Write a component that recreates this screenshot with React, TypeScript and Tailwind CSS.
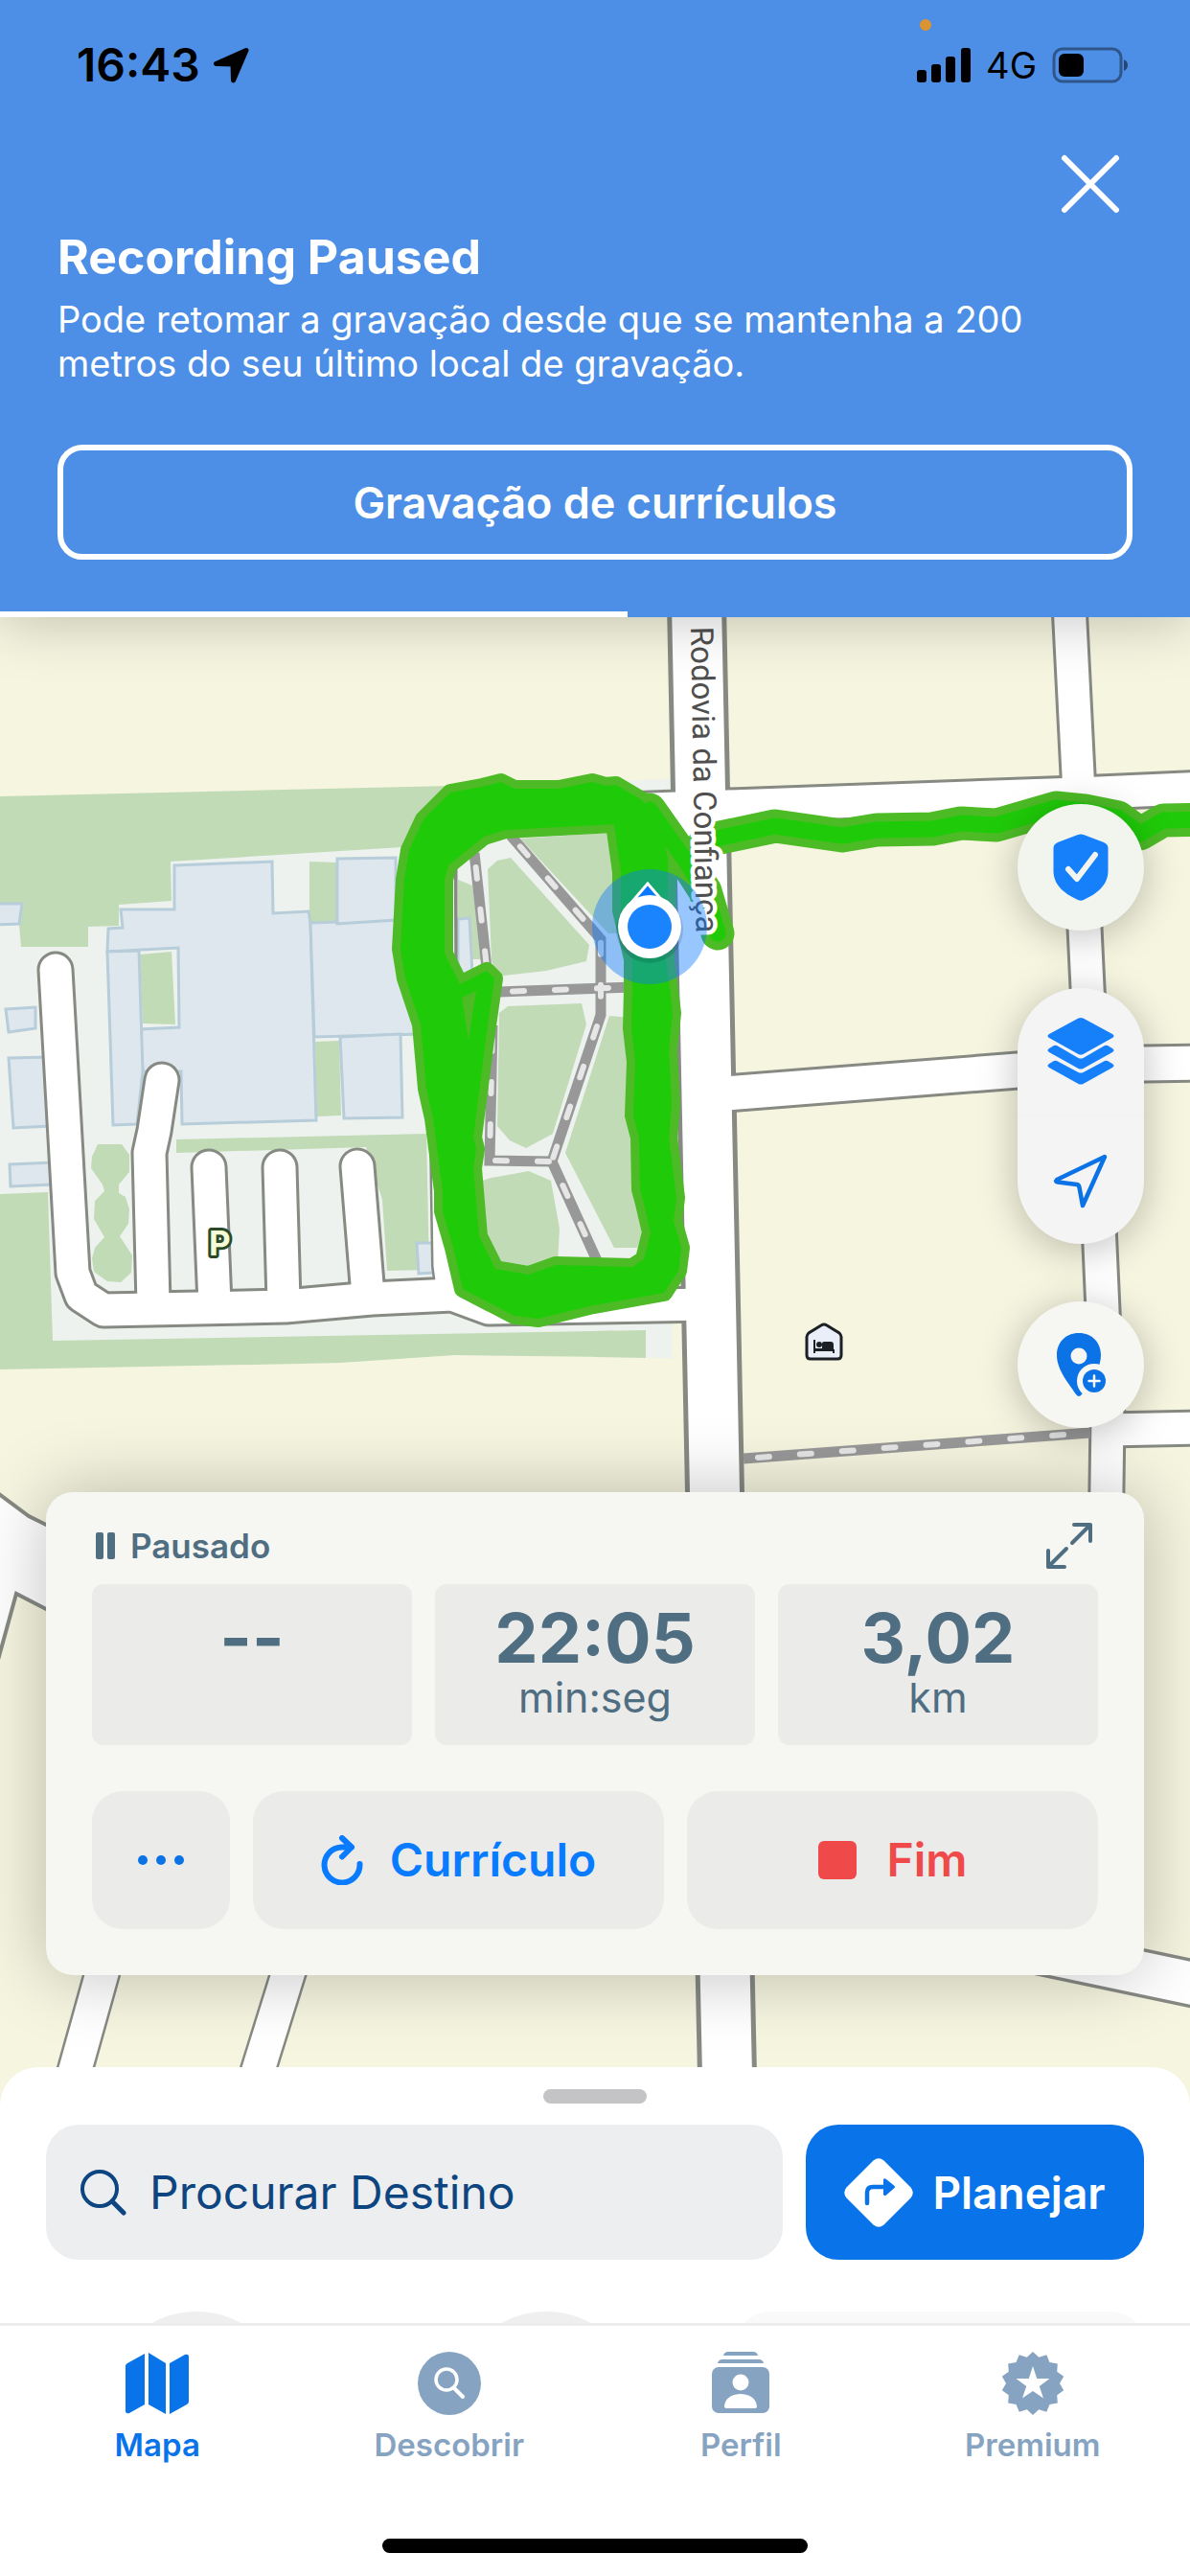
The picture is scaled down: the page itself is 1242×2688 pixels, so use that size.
import type { ReactNode } from 'react';

const CAMPUS_LAWNS = [
  '323,899 351,900 351,962 323,962',
  '146,996 179,993 183,1069 149,1068',
  '329,1087 354,1086 356,1164 331,1165',
  '184,1189 445,1183 448,1325 404,1326 399,1252 382,1197 184,1203',
  '102,1194 127,1194 135,1205 135,1223 124,1236 124,1245 131,1249 135,1262 134,1277 125,1290 138,1310 137,1328 126,1338 112,1337 98,1327 96,1313 99,1302 109,1291 98,1272 99,1253 109,1243 107,1236 95,1219 96,1207',
];

const PARK_LAWNS = [
  '509,907 519,898 533,895 615,986 612,1003 570,1013 517,1019 513,1001',
  '543,875 635,869 641,910 645,974 635,974',
  '521,1057 530,1050 607,1047 612,1069 577,1183 549,1198 532,1190 519,1175',
  '636,1060 660,1062 668,1247 672,1286 665,1302 641,1302 590,1203',
  '500,1233 513,1229 552,1222 575,1232 584,1282 582,1318 552,1326 515,1320 500,1286',
  '478,918 493,924 503,1001 478,1001',
];

const BUILDINGS = [
  '182,903 284,899 285,953 322,951 324,963 330,1169 190,1173 189,1118 149,1118 146,1074 187,1072 186,989 112,993 113,969 128,968 126,949 182,949',
  '112,993 145,992 149,1118 143,1173 118,1174',
  '324,963 412,960 440,960 440,1079 328,1082',
  '352,896 413,895 413,960 352,964',
  '478,959 490,958 493,1017 478,1017',
  '355,1082 418,1079 420,1166 359,1167',
  '-4,943 23,943 20,964 -4,965',
  '6,1053 37,1051 37,1073 9,1077',
  '9,1104 50,1103 52,1175 14,1177',
  '10,1215 54,1213 54,1236 11,1238',
  '435,1297 452,1297 452,1328 437,1329',
];

// [path, outer width, inner width]
const ROADS: [string, number, number][] = [
  ['M58 1012 L76 1328 L85 1352 L108 1367 L298 1363 L388 1355 L472 1351 L510 1365 L740 1361', 39, 33],
  ['M169 1127 L161 1180 L156 1203 L160 1360', 39, 33],
  ['M218 1218 L224 1360', 39, 33],
  ['M292 1218 L296 1358', 39, 33],
  ['M373 1217 L384 1352', 39, 33],
  ['M457 880 L458 1000 L467 1190 L469 1320 L473 1350', 38, 33],
  ['M600 847 L760 841 L1125 828 L1260 822', 39, 33],
  ['M1116 630 L1125 808 L1132 968 L1148 1300 L1156 1480 L1154 1620', 39, 33],
  ['M745 1142 L1062 1117 L1194 1110 L1260 1109', 41, 35],
  ['M1155 1492 L1260 1490', 39, 33],
  ['M960 2010 L1260 2073', 51, 44],
  ['M130 1975 L68 2197', 39, 34],
  ['M327 1975 L258 2197', 39, 34],
  ['M727 630 L746 1557 L758 2120 L760 2210', 62, 52],
];

const FOOTPATHS = [
  'M533 872 L627 980 L627 1059 L576 1212 L626 1322',
  'M495 890 L508 1010',
  'M520 1035 L660 1030',
  'M514 1070 L511 1211 L576 1212',
  'M776 1522 L1138 1495',
];

const LOOP =
  'M503 821 L523 816 L537 823 L583 823 L618 816 L632 820 L643 819 L670 835 L690 867 L697 895 L697 918 L695 1001 L702 1057 L698 1096 L701 1152 L698 1187 L706 1250 L703 1274 L711 1302 L708 1326 L693 1349 L615 1363 L562 1376 L537 1373 L483 1345 L473 1302 L462 1264 L462 1243 L452 1167 L445 1136 L439 1069 L423 1021 L418 990 L422 918 L427 887 L442 855 L470 827 Z ' +
  'M468 903 L505 873 L528 866 L641 860 L648 910 L648 950 L660 1001 L660 1033 L659 1073 L663 1108 L661 1164 L667 1187 L668 1241 L672 1256 L679 1286 L672 1314 L660 1322 L580 1320 L552 1330 L517 1324 L500 1290 L494 1219 L497 1199 L494 1187 L508 1077 L516 1021 L508 1013 L480 1027 L464 995 L464 918 Z';

const HOOK = 'M678 845 L714 896 L736 930 L749 974';
const EASTBOUND =
  'M735 880 L747 875 L809 862 L879 872 L915 866 L973 865 L1003 859 L1040 861 L1102 843 L1132 846 L1167 853 L1190 870 L1214 856 L1260 855';

function MapCanvas() {
  return (
    <svg
      className="absolute inset-0 h-full w-full"
      viewBox="0 644 1242 1553"
      preserveAspectRatio="xMidYMin slice"
      aria-hidden="true"
    >
      <rect x="-200" y="500" width="1700" height="1900" fill="#f6f5e0" />

      {/* Campus ground */}
      <path d="M0 831 L470 820 L640 818 L640 1416 L475 1414 L355 1422 L314 1423 L0 1429 Z" fill="#c1dbb7" />
      <path d="M178 899 L420 884 L640 870 L640 815 L702 813 L702 1417 L674 1417 L674 1388 L55 1399 L50 1244 L0 1246 L0 965 L20 965 L22 988 L92 988 L92 967 L124 966 L124 944 L179 940 Z" fill="#edf2ee" />
      <path d="M620 1389 L674 1388 L674 1417 L620 1416 Z" fill="#c1dbb7" />
      <g fill="#c1dbb7">
        {CAMPUS_LAWNS.map((points) => <polygon key={points} points={points} />)}
      </g>
      <g fill="#dee6ee" stroke="#b7cdd9" strokeWidth="3">
        {BUILDINGS.map((points) => <polygon key={points} points={points} />)}
      </g>

      {/* Roads: casings first so that the junctions stay open */}
      <g fill="none" stroke="#868a83" strokeLinejoin="round">
        {ROADS.map(([d, outer], i) => (
          <path key={d} d={d} strokeWidth={outer} strokeLinecap={i < 5 ? 'round' : 'butt'} />
        ))}
      </g>
      <path d="M-5 1556 L30 1582 L48 1591 L130 1625 L130 1712 L48 1679 L17 1663 L-5 1743 Z" fill="#fff" stroke="#868a83" strokeWidth="4" />
      <g fill="none" stroke="#fff" strokeLinejoin="round">
        {ROADS.map(([d, , inner], i) => (
          <path key={d} d={d} strokeWidth={inner} strokeLinecap={i < 5 ? 'round' : 'butt'} />
        ))}
      </g>

      {/* Park */}
      <path d="M478 880 L660 850 L690 870 L690 1320 L500 1330 L496 1100 L478 1030 Z" fill="#edf2ee" />
      <g fill="#c1dbb7">
        {PARK_LAWNS.map((points) => <polygon key={points} points={points} />)}
      </g>
      <polygon points="478,959 490,958 493,1017 478,1017" fill="#dee6ee" stroke="#b7cdd9" strokeWidth="3" />
      <path d="M476 900 V1010" stroke="#868a83" strokeWidth="3" />
      <g fill="none" stroke="#989898" strokeWidth="11">
        {FOOTPATHS.map((d) => <path key={d} d={d} />)}
      </g>
      <g fill="none" stroke="#e6e6e6" strokeWidth="6" strokeLinecap="round" strokeDasharray="12 32" strokeDashoffset="-15">
        {FOOTPATHS.map((d) => <path key={d} d={d} />)}
      </g>

      {/* Recorded track */}
      <g fill="none" stroke="#4cbb26" strokeLinejoin="round" strokeLinecap="round">
        <path d={LOOP} strokeWidth="18" />
        <path d={HOOK} strokeWidth="35" />
        <path d={EASTBOUND} strokeWidth="35" />
      </g>
      <path d={LOOP} fill="#1fcb08" fillRule="evenodd" />
      <g fill="none" stroke="#1fcb08" strokeLinejoin="round" strokeLinecap="round" strokeWidth="17">
        <path d={HOOK} />
        <path d={EASTBOUND} />
      </g>
      <path d="M482 1041 L497 1034 L489 1086 Z" fill="#4cbb26" />

      <text
        transform="translate(721 654) rotate(89)"
        className="font-[Roboto,sans-serif] text-[33px]"
        fill="#4f4f4f"
        stroke="#fff"
        strokeWidth="9"
        strokeLinejoin="round"
        paintOrder="stroke"
      >
        Rodovia da Confiança
      </text>

      {/* Parking and hotel markers */}
      <text
        x="218"
        y="1310"
        className="font-[Inter,sans-serif] text-[35px] font-bold"
        fill="#f4fbd6"
        stroke="#2a4a27"
        strokeWidth="6"
        strokeLinejoin="round"
        paintOrder="stroke"
      >
        P
      </text>
      <path d="M842 1395 Q842 1393 844 1391 L857 1383 Q860 1381 863 1383 L876 1391 Q878 1393 878 1395 V1414 Q878 1418 874 1418 H846 Q842 1418 842 1414 Z" fill="#e9eef8" stroke="#1c1f24" strokeWidth="3" />
      <path d="M850 1398 V1412 M850 1409 H870 V1412" fill="none" stroke="#1c1f24" strokeWidth="2" />
      <circle cx="855" cy="1403" r="3" fill="#1c1f24" />
      <path d="M858 1407 V1402 Q858 1400 860 1400 H867 Q870 1400 870 1403 V1409 H851 V1407 Z" fill="#1c1f24" />

      {/* Current position */}
      <circle cx="678" cy="967" r="60" fill="#0a78ff" fillOpacity="0.42" />
      <path d="M676 922 L658 943 H694 Z" fill="#0a78ff" stroke="#fff" strokeWidth="3" />
      <circle cx="678" cy="970" r="35" fill="#000" fillOpacity="0.12" />
      <circle cx="678" cy="967" r="33" fill="#fff" />
      <circle cx="678" cy="967" r="23" fill="#1a84ff" />
    </svg>
  );
}

function StatusBar() {
  return (
    <div className="relative flex h-34 items-center justify-between pr-16 pl-20 text-black">
      <div className="flex items-center gap-3">
        <span className="text-[48px] leading-none font-semibold">16:43</span>
        <svg className="h-10 w-10" viewBox="0 0 40 40" fill="currentColor" stroke="currentColor" strokeWidth="5" strokeLinejoin="round">
          <path d="M36 4.500 L4.500 18.500 L22 19 L22.500 36 Z" />
        </svg>
      </div>
      <div className="flex items-center gap-4">
        <svg className="h-9 w-14" viewBox="0 0 56 36" fill="currentColor">
          <rect x="0" y="23" width="10" height="13" rx="3" />
          <rect x="15" y="17" width="10" height="19" rx="3" />
          <rect x="30" y="9" width="10" height="27" rx="3" />
          <rect x="46" y="0" width="10" height="36" rx="3" />
        </svg>
        <span className="text-[38px] leading-none">4G</span>
        <svg className="h-10 w-20" viewBox="0 0 80 40">
          <rect x="2" y="3" width="70" height="34" rx="9" fill="none" stroke="#000" strokeOpacity="0.4" strokeWidth="3" />
          <path d="M75 14 Q79 16 79 20 Q79 24 75 26 Z" fill="#000" fillOpacity="0.5" />
          <rect x="7" y="8" width="26" height="24" rx="6" fill="#000" />
        </svg>
      </div>
      <span className="absolute top-5 left-[960px] h-3 w-3 rounded-full bg-[#dc9432]" />
    </div>
  );
}

function PausedBanner() {
  return (
    <header className="relative z-10 bg-[#4d8fe6] text-white shadow-[0_0_60px_rgba(0,0,0,0.25)]">
      <StatusBar />
      <div className="flex justify-end pt-6 pr-18">
        <button type="button" aria-label="Fechar" className="h-16 w-16">
          <svg viewBox="0 0 64 64" fill="none" stroke="currentColor" strokeWidth="6" strokeLinecap="round">
            <path d="M5 5 L59 59 M59 5 L5 59" />
          </svg>
        </button>
      </div>
      <div className="px-15 pt-[14px] pb-[54px]">
        <h1 className="text-[50px] leading-[60px] font-bold">Recording Paused</h1>
        <p className="mt-3 mb-0.5 text-[38px] leading-[46px]">
          Pode retomar a gravação desde que se mantenha a 200
          <br />
          metros do seu último local de gravação.
        </p>
        <button type="button" className="mt-15 h-30 w-full rounded-[26px] border-6 border-white text-[45px] leading-none font-semibold">
          Gravação de currículos
        </button>
      </div>
      <div className="h-[6px] w-[52.7%] bg-white" />
    </header>
  );
}

function MapControls() {
  return (
    <div className="flex flex-col items-end gap-15">
      <button type="button" aria-label="Segurança" className="flex h-33 w-33 items-center justify-center rounded-full bg-[#f1f5ee] shadow-[0_6px_40px_rgba(0,0,0,0.25)]">
        <svg className="h-18 w-15" viewBox="0 0 60 72">
          <path d="M27 2 Q30 1 33 2 L54 10 Q58.500 12 58.500 16 V40 C58.500 55 46 64 33 70 Q30 71.500 27 70 C14 64 1.500 55 1.500 40 V16 Q1.500 12 6 10 Z" fill="#1680fb" />
          <path d="M17 38 L26 48 L45 23" fill="none" stroke="#f1f5ee" strokeWidth="6" strokeLinecap="round" strokeLinejoin="round" />
        </svg>
      </button>
      <div className="flex w-33 flex-col rounded-[66px] bg-[#f4f4f4] shadow-[0_6px_40px_rgba(0,0,0,0.25)]">
        <button type="button" aria-label="Camadas" className="flex h-33 items-center justify-center">
          <svg className="h-18 w-18" viewBox="0 0 72 72" fill="#1680fb">
            <path d="M33.500 1.500 Q36 0.500 38.500 1.500 L69 18 Q72 20 69 22 L38.500 39 Q36 40 33.500 39 L3 22 Q0 20 3 18 Z" />
            <path d="M3 33 L8 30 Q9.500 29.500 11 30 L33.500 43 Q36 44 38.500 43 L61 30 Q62.500 29.500 64 30 L69 33 Q72 35 69 37 L38.500 54 Q36 55 33.500 54 L3 37 Q0 35 3 33 Z" />
            <path d="M3 49 L8 46 Q9.500 45.500 11 46 L33.500 58 Q36 59 38.500 58 L61 46 Q62.500 45.500 64 46 L69 49 Q72 51 69 53 L38.500 70 Q36 71 33.500 70 L3 53 Q0 51 3 49 Z" />
          </svg>
        </button>
        <div className="h-[3px] bg-[#f2f2f5]" />
        <button type="button" aria-label="Minha localização" className="flex h-33 items-center justify-center">
          <svg className="h-15 w-15" viewBox="0 0 60 60">
            <path d="M55 5 L5 29 Q3 31 6 31.500 L26 34 Q28 34.500 28.500 37 L32 56 Z" fill="none" stroke="#0b73e6" strokeWidth="4.500" strokeLinejoin="round" />
          </svg>
        </button>
      </div>
      <button type="button" aria-label="Adicionar ponto" className="flex h-33 w-33 items-center justify-center rounded-full bg-[#f6f6f3] shadow-[0_6px_40px_rgba(0,0,0,0.25)]">
        <svg className="h-17 w-13" viewBox="0 0 52 68">
          <path d="M24 1 C10 1 1 11 1 24 C1 40 14 54 21 65 Q24 69 27 65 C39 51 47 36 47 24 C47 11 38 1 24 1 Z" fill="#0b73e6" />
          <circle cx="24" cy="25" r="8.500" fill="#f6f6f3" />
          <circle cx="40" cy="51" r="18" fill="#f6f6f3" />
          <circle cx="40" cy="51" r="12" fill="#0b73e6" />
          <path d="M34.500 51 H45.500 M40 45.500 V56.500" stroke="#fff" strokeWidth="2.500" strokeLinecap="round" />
        </svg>
      </button>
    </div>
  );
}

const STATS = [
  { value: '--', unit: '' },
  { value: '22:05', unit: 'min:seg' },
  { value: '3,02', unit: 'km' },
];

function RecordingCard() {
  return (
    <section className="mt-[67px] rounded-[28px] bg-[#f6f6f3] px-12 pt-5 pb-12 text-[#4f6e82] shadow-[0_0_75px_rgba(0,0,0,0.25)]">
      <div className="flex h-19 items-center justify-between pr-1 pb-1">
        <div className="flex items-center gap-4 pl-1">
          <svg className="h-7 w-5" viewBox="0 0 20 28" fill="currentColor">
            <rect x="0" y="0" width="8" height="28" rx="2" />
            <rect x="12" y="0" width="8" height="28" rx="2" />
          </svg>
          <h2 className="text-[35px] leading-10 font-semibold">Pausado</h2>
        </div>
        <button type="button" aria-label="Expandir">
          <svg className="h-13 w-13" viewBox="0 0 52 52" fill="none" stroke="currentColor" strokeWidth="4" strokeLinecap="round" strokeLinejoin="round">
            <path d="M31 4 H48 V21 M48 4 L29 23 M4 31 V48 H21 M4 48 L23 29" />
          </svg>
        </button>
      </div>
      <dl className="grid grid-cols-3 gap-6">
        {STATS.map((stat) => (
          <div key={stat.value} className="flex h-42 flex-col-reverse justify-end rounded-xl bg-[#ebebe9] pt-4 text-center">
            <dt className="text-[43px] leading-11">{stat.unit}</dt>
            <dd className="text-[72px] leading-20 font-bold">{stat.value}</dd>
          </div>
        ))}
      </dl>
      <div className="mt-12 flex gap-6">
        <button type="button" aria-label="Mais opções" className="flex h-36 w-36 items-center justify-center rounded-[32px] bg-[#ebebe9] text-[#0b73e6]">
          <svg className="h-3 w-12" viewBox="0 0 48 12" fill="currentColor">
            <circle cx="5" cy="6" r="5" />
            <circle cx="24" cy="6" r="5" />
            <circle cx="43" cy="6" r="5" />
          </svg>
        </button>
        <button type="button" className="flex h-36 flex-1 items-center justify-center gap-7 rounded-[32px] bg-[#ebebe9] text-[48px] leading-none font-semibold text-[#087bff]">
          <svg className="h-13 w-11" viewBox="0 0 44 52" fill="none" stroke="currentColor" strokeWidth="6" strokeLinecap="round" strokeLinejoin="round">
            <path d="M22 3 L32 12.500 L22 22.500 M32 12.500 H21 A18.500 18.500 0 1 0 40.500 30" />
          </svg>
          Currículo
        </button>
        <button type="button" className="flex h-36 flex-1 items-center justify-center gap-8 rounded-[32px] bg-[#ebebe9] text-[48px] leading-none font-semibold text-[#ef4a49]">
          <span className="h-10 w-10 rounded-md bg-[#ef4a49]" />
          Fim
        </button>
      </div>
    </section>
  );
}

function SearchSheet() {
  return (
    <section className="relative -mt-10 overflow-hidden rounded-t-[40px] bg-white px-12 pt-[23px]">
      <div className="mx-auto h-[15px] w-27 rounded-full bg-[#c4c4c6]" />
      <div className="mt-[22px] flex gap-6">
        <label className="flex h-[141px] min-w-0 flex-1 items-center gap-6 rounded-[34px] bg-[#edeef0] px-9">
          <svg className="h-12 w-12" viewBox="0 0 48 48" fill="none" stroke="#0d4580" strokeWidth="4" strokeLinecap="round">
            <circle cx="20" cy="20" r="18" />
            <path d="M33 33 L45 45" strokeWidth="5" />
          </svg>
          <input
            type="search"
            aria-label="Procurar Destino"
            placeholder="Procurar Destino"
            className="min-w-0 flex-1 bg-transparent text-[48px] text-[#0d4580] outline-none placeholder:text-[#0d4580]"
          />
        </label>
        <button type="button" className="flex w-[353px] items-center justify-center gap-5 rounded-[34px] bg-[#0973e9] text-[46px] leading-none font-semibold text-white">
          <svg className="h-18 w-18" viewBox="0 0 72 72">
            <path d="M30.500 2.500 Q36 -2 41.500 2.500 L69.500 30.500 Q74 36 69.500 41.500 L41.500 69.500 Q36 74 30.500 69.500 L2.500 41.500 Q-2 36 2.500 30.500 Z" fill="#fff" />
            <path d="M24 47 V36 Q24 30 30 30 H44" fill="none" stroke="#0973e9" strokeWidth="4.500" strokeLinecap="round" />
            <path d="M41 22 Q42 20.500 44 22 L52 28.500 Q54 30 52 31.500 L44 38.500 Q42 40 41 38 Z" fill="#0973e9" />
          </svg>
          Planejar
        </button>
      </div>
      {/* Tops of the shortcuts that are scrolled out below */}
      <div className="mt-[54px] flex h-3 overflow-hidden pl-[61px]">
        <div className="mr-[173px] h-48 w-48 shrink-0 rounded-full bg-[#efefef]" />
        <div className="mr-[103px] h-48 w-48 shrink-0 rounded-full bg-[#efefef]" />
        <div className="h-48 flex-1 rounded-[34px] bg-[#f9f9f9]" />
      </div>
    </section>
  );
}

interface TabProps {
  label: string;
  active?: boolean;
  children: ReactNode;
}

function Tab({ label, active, children }: TabProps) {
  return (
    <a
      href="#"
      aria-current={active ? 'page' : undefined}
      className={`flex flex-1 flex-col items-center gap-3 ${active ? 'text-[#0973e9]' : 'text-[#86a3c1]'}`}
    >
      <svg className="h-17 w-17" viewBox="0 0 68 68" fill="currentColor">
        {children}
      </svg>
      <span className="text-[33px] leading-9 font-semibold">{label}</span>
    </a>
  );
}

// 14-pointed badge
const BADGE = Array.from({ length: 28 }, (_, i) => {
  const r = i % 2 ? 28 : 33;
  const a = (Math.PI * i) / 14 - Math.PI / 2;
  return `${34 + r * Math.cos(a)},${34 + r * Math.sin(a)}`;
}).join(' ');

function TabBar() {
  return (
    <footer className="relative border-t-3 border-[#ededf0] bg-white">
      <nav className="flex px-3 pt-[26px]">
        <Tab label="Mapa" active>
          <path d="M1 16 Q1 14 3 13 L21 3 V56 L5 65 Q1 66 1 63 Z" />
          <path d="M25 2 L43 13 V66 L25 56 Z" />
          <path d="M47 13 L63 4 Q67 3 67 6 V53 Q67 55 65 56 L47 66 Z" />
        </Tab>
        <Tab label="Descobrir">
          <circle cx="34" cy="34" r="33" />
          <circle cx="31" cy="30" r="11" fill="none" stroke="#fff" strokeWidth="3.500" />
          <path d="M39 39 L48 48" stroke="#fff" strokeWidth="4" strokeLinecap="round" />
        </Tab>
        <Tab label="Perfil">
          <path d="M16 5 Q17 1 21 1 H47 Q51 1 52 5 Z M10 13 Q11 9 15 9 H53 Q57 9 58 13 Z" />
          <rect x="4" y="17" width="60" height="48" rx="7" />
          <circle cx="34" cy="33" r="8.500" fill="#fff" />
          <path d="M17 58 C18 48 27 45 34 45 C41 45 50 48 51 58 Q51 60 49 60 H19 Q17 60 17 58 Z" fill="#fff" />
        </Tab>
        <Tab label="Premium">
          <polygon points={BADGE} />
          <path d="M34 16 L38.200 29 H51.500 L40.800 37 L45 49.500 L34 42 L23 49.500 L27.200 37 L16.500 29 H29.800 Z" fill="#fff" />
        </Tab>
      </nav>
      <div className="mx-auto mt-20 mb-6 h-[15px] w-111 rounded-full bg-black" />
    </footer>
  );
}

export default function App() {
  return (
    <div className="flex min-h-screen flex-col bg-white font-[Inter,'Liberation_Sans',sans-serif]">
      <PausedBanner />
      <main className="relative flex-1 overflow-hidden px-12 pt-[195px] pb-34">
        <MapCanvas />
        <div className="relative">
          <MapControls />
          <RecordingCard />
        </div>
      </main>
      <SearchSheet />
      <TabBar />
    </div>
  );
}
